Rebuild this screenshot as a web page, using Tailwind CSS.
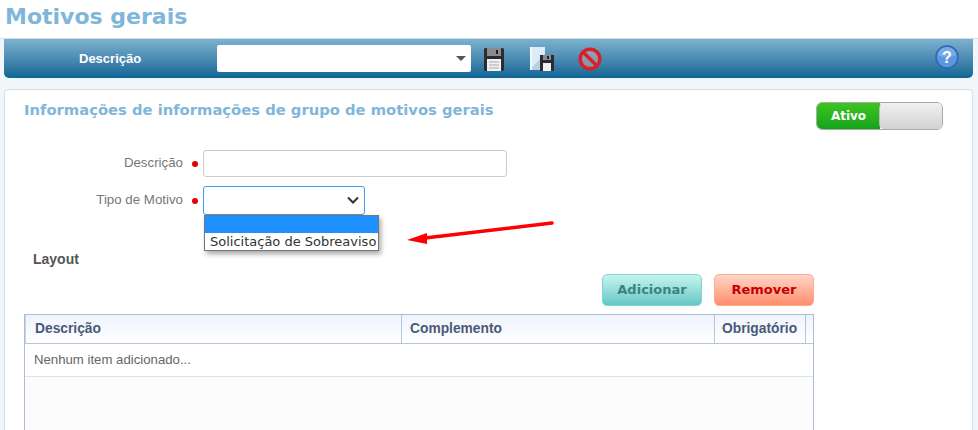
<!DOCTYPE html>
<html><head><meta charset="utf-8"><script src="https://cdn.jsdelivr.net/npm/@tailwindcss/browser@4"></script></head>
<body class="w-[978px] h-[430px] overflow-hidden bg-white font-['Liberation_Sans',sans-serif]">
<header class="h-[39px] pl-[5px] pt-[3px] bg-white border-b border-[#cfe0ec]">
<h1 class="font-['DejaVu_Sans',sans-serif] font-bold text-[22px] leading-[28px] text-[#7fb6da]">Motivos gerais</h1>
</header>
<main class="h-[391px] overflow-hidden bg-[#f1f6fb] pl-[4px] pr-[5px]">
<div class="h-[39px] rounded-b-[5px] bg-gradient-to-b from-[#7db2cf] to-[#0b6595] flex items-center relative">
  <span class="w-[213px] pl-[75px] text-white font-bold text-[13px]">Descrição</span>
  <div class="w-[254px] h-[27px] bg-white rounded-[2px] flex items-center justify-end pr-[5px]"><span class="w-0 h-0 border-x-[5px] border-x-transparent border-t-[5px] border-t-[#555]"></span></div>
  <div class="ml-[13px] flex items-center mt-[1px]">
   <svg width="20" height="23" viewBox="0 0 20 23"><path d="M0 1.500A1.500 1.500 0 0 1 1.500 0h17A1.500 1.500 0 0 1 20 1.500v20a1.500 1.500 0 0 1-1.500 1.500h-17A1.500 1.500 0 0 1 0 21.500z" fill="#2c2c30"/><path d="M3 0h14v8H3z" fill="#8c8c8c"/><path d="M12 2h2v4h-2z" fill="#222"/><path d="M3 11h14v12H3z" fill="#f1f1f1"/><path d="M5 14h10M5 17h10M5 20h10" stroke="#aaa"/></svg>
   <svg width="24" height="24" viewBox="0 0 24 24" class="ml-[26px]"><path d="M0 0h15v23H0z" fill="#d9ecf8"/><path d="M0 23 15 6v17z" fill="#b6cfdf"/><path d="M0 0h2v23H0z" fill="#f0f8ff"/><path d="M10 8h14v16H10z" fill="#2c2c30"/><path d="M13 8h8v5h-8z" fill="#8c8c8c"/><path d="M17 9h2v3h-2z" fill="#222"/><path d="M13 16h8v8h-8z" fill="#f1f1f1"/></svg>
   <svg width="24" height="24" viewBox="0 0 24 24" class="ml-[24px]"><circle cx="12" cy="12" r="9.800" fill="#c9a4a8" fill-opacity=".55" stroke="#d4222c" stroke-width="3.400"/><path d="M5.500 5.500l13 13" stroke="#d4222c" stroke-width="3.400"/></svg>
  </div>
  <div class="absolute right-[14px] top-[6px]"><svg width="24" height="24" viewBox="0 0 24 24"><circle cx="12" cy="12" r="11" fill="#5b97e0" stroke="#2f66b4" stroke-width="1.500"/><path d="M3 10a9 8 0 0 1 18 0c-5 3-13 3-18 0z" fill="#fff" fill-opacity=".2"/><text x="12" y="17.500" text-anchor="middle" font-family="Liberation Sans" font-weight="700" font-size="16" fill="#fff">?</text></svg></div>
</div>
<section class="mt-[11px] h-[400px] bg-white border border-[#cfe0ec] rounded-t-[4px] relative">
  <div class="flex justify-between pl-[19px] pr-[29px] pt-[10px]">
    <h2 class="font-['DejaVu_Sans',sans-serif] font-bold text-[14.750px] leading-[20px] text-[#7fb6da]">Informações de informações de grupo de motivos gerais</h2>
    <div class="w-[127px] h-[28px] mt-[2px] rounded-[6px] border border-[#aaa] flex overflow-hidden">
      <div class="w-[63px] bg-gradient-to-b from-[#3cc41e] to-[#12a31c] text-white font-bold text-[12px] flex items-center justify-center font-['DejaVu_Sans',sans-serif]">Ativo</div>
      <div class="flex-1 -ml-[1px] rounded-l-[5px] border-l border-[#bbb] bg-gradient-to-b from-[#f1f1f1] to-[#d2d2d2]"></div>
    </div>
  </div>
  <div class="mt-[20px] flex items-center h-[27px]">
    <label class="w-[178px] pb-[2px] text-right text-[13.300px] text-[#777]">Descrição</label>
    <span class="ml-[9px] w-[6px] h-[6px] rounded-full bg-[#e60000]"></span>
    <div class="ml-[5px] w-[304px] h-[27px] rounded-[3px] border border-[#ccc] bg-white"></div>
  </div>
  <div class="mt-[9px] flex items-center h-[29px]">
    <label class="w-[178px] pb-[2px] text-right text-[13.300px] text-[#777]">Tipo de Motivo</label>
    <span class="ml-[9px] w-[6px] h-[6px] rounded-full bg-[#e60000]"></span>
    <div class="ml-[5px] w-[162px] h-[29px] rounded-[3px] border border-[#3b9bf0] bg-white flex items-center justify-end pr-[4px]"><svg width="14" height="9" viewBox="0 0 14 9"><path d="M2 1.500l5 5 5-5" fill="none" stroke="#333" stroke-width="2"/></svg></div>
  </div>
  <div class="absolute left-[199px] top-[125px] w-[175px] h-[36px] bg-white border border-[#767676] shadow-[2px_3px_5px_rgba(0,0,0,.35)] font-['DejaVu_Sans',sans-serif]">
    <div class="h-[17px] bg-[#1e90ff]"></div>
    <div class="pl-[5px] text-[13px] leading-[17px] text-[#333] whitespace-nowrap">Solicitação de Sobreaviso</div>
  </div>
  <svg class="absolute left-[396px] top-[128px]" width="160" height="30" viewBox="0 0 160 30"><path d="M151 5 24 20" stroke="#f00" stroke-width="3.500" stroke-linecap="round"/><path d="M6 22 26 15v11z" fill="#f00"/></svg>
  <h3 class="pl-[28px] mt-[35px] font-bold text-[14px] leading-[18px] text-[#555]">Layout</h3>
  <div class="flex justify-end gap-[12px] w-[809px] mt-[6px] font-['DejaVu_Sans',sans-serif] font-bold text-[13px]">
    <button class="w-[100px] h-[32px] rounded-[5px] border border-[#7fd6d2] bg-gradient-to-b from-[#c6f4f0] to-[#63c8c4] text-[#3a8380]">Adicionar</button>
    <button class="w-[100px] h-[32px] rounded-[5px] border border-[#ffa98e] bg-gradient-to-b from-[#ffd5c8] to-[#ff8d6c] text-[#c80000]">Remover</button>
  </div>
  <div class="ml-[19px] mt-[8px] w-[790px] h-[140px] border border-[#aebdd3] border-b-0 bg-[#fcfcfc]">
    <div class="h-[29px] flex border-b border-[#b8c5d8] bg-gradient-to-b from-[#eef3fc] to-white font-bold text-[13.800px] text-[#4a5a78] border-l border-l-[#c5d0e0]">
      <div class="w-[376px] pl-[9px] leading-[27px] border-r border-[#b8c5d8]">Descrição</div>
      <div class="w-[313px] pl-[8px] leading-[27px] border-r border-[#b8c5d8]">Complemento</div>
      <div class="w-[91px] pl-[7px] leading-[27px] border-r border-[#b8c5d8]">Obrigatório</div>
    </div>
    <div class="h-[33px] pl-[9px] bg-white border-b border-[#dbe4ee] text-[13.200px] leading-[31px] text-[#666]">Nenhum item adicionado...</div>
  </div>
</section>
</main>
</body></html>
